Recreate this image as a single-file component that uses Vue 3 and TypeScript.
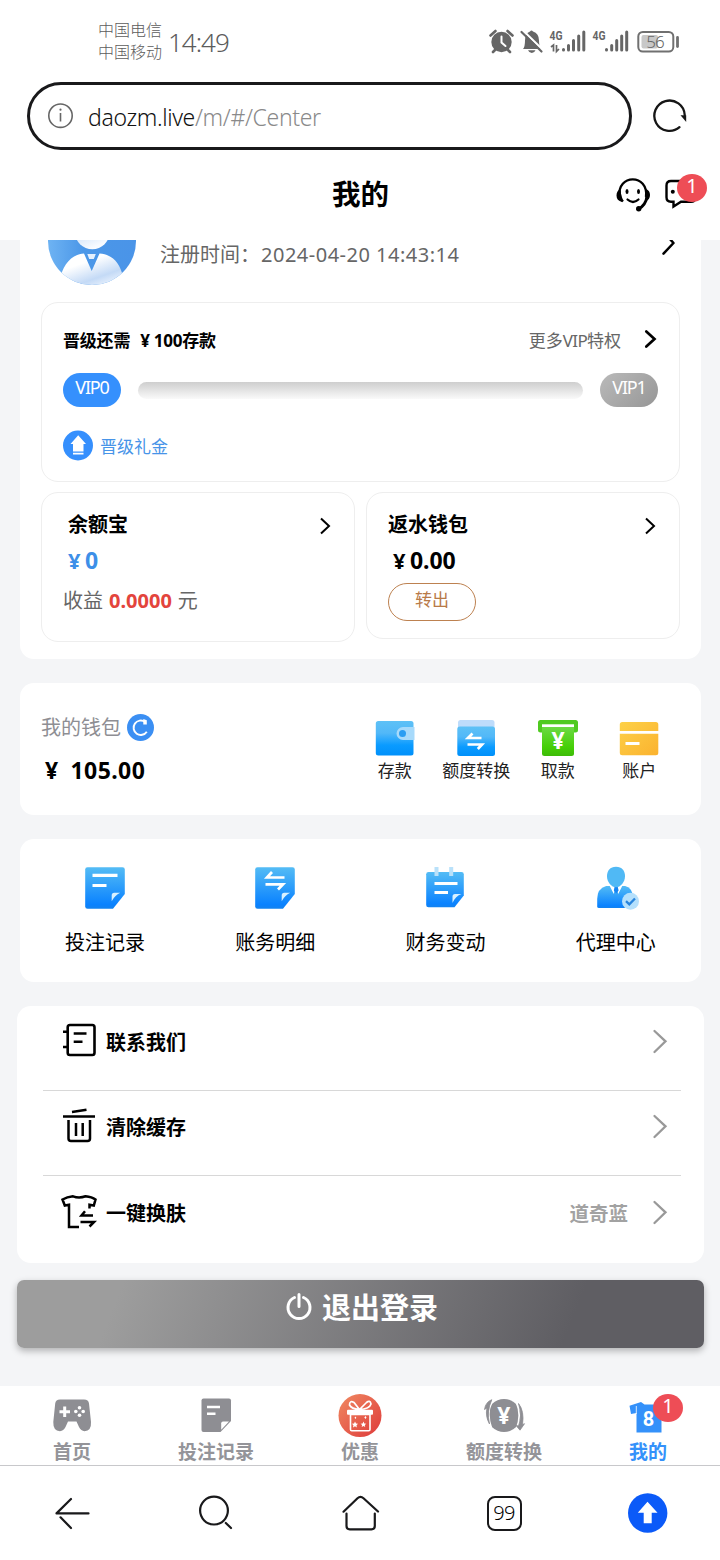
<script setup lang="ts">
interface Item { id: string; label: string }

const walletActions: Item[] = [
  { id: 'deposit', label: '存款' },
  { id: 'transfer', label: '额度转换' },
  { id: 'withdraw', label: '取款' },
  { id: 'account', label: '账户' },
]
const records: Item[] = [
  { id: 'bets', label: '投注记录' },
  { id: 'bill', label: '账务明细' },
  { id: 'finance', label: '财务变动' },
  { id: 'agent', label: '代理中心' },
]
const settings: (Item & { value?: string })[] = [
  { id: 'contact', label: '联系我们' },
  { id: 'clear', label: '清除缓存' },
  { id: 'skin', label: '一键换肤', value: '道奇蓝' },
]
const tabs: Item[] = [
  { id: 'home', label: '首页' },
  { id: 'bets', label: '投注记录' },
  { id: 'promo', label: '优惠' },
  { id: 'transfer', label: '额度转换' },
  { id: 'mine', label: '我的' },
]
</script>

<template>
  <div class="screen">
    <svg class="defs" width="0" height="0" aria-hidden="true">
      <defs>
        <linearGradient id="gBlue" x1="0" y1="0" x2="0" y2="1"><stop offset="0" stop-color="#5ec1f6" /><stop offset=".35" stop-color="#52b8f8" /><stop offset=".7" stop-color="#0a9bff" /><stop offset="1" stop-color="#0090fa" /></linearGradient>
        <linearGradient id="gDoc" x1="0" y1="0" x2="0" y2="1"><stop offset="0" stop-color="#54bcf5" /><stop offset=".9" stop-color="#0a82ff" /><stop offset="1" stop-color="#1482ee" /></linearGradient>
        <linearGradient id="gGreen" x1="0" y1="0" x2="0" y2="1"><stop offset="0" stop-color="#6cd944" /><stop offset=".7" stop-color="#45cf06" /><stop offset="1" stop-color="#3dbb08" /></linearGradient>
        <linearGradient id="gGold" x1="0" y1="0" x2="1" y2="1"><stop offset="0" stop-color="#fdd148" /><stop offset="1" stop-color="#fbb22f" /></linearGradient>
        <linearGradient id="gAvatar" x1="0" y1="0" x2="1" y2="0"><stop offset="0" stop-color="#6eb3f3" /><stop offset=".4" stop-color="#4b97e8" /><stop offset="1" stop-color="#4a94e8" /></linearGradient>
        <linearGradient id="gBody" x1="0" y1="0" x2=".6" y2="1"><stop offset=".35" stop-color="#fff" /><stop offset=".75" stop-color="#c4daf6" /><stop offset="1" stop-color="#eef5fe" /></linearGradient>
        <linearGradient id="gHead" x1="0" y1="0" x2=".4" y2="1"><stop offset=".5" stop-color="#cfe2f8" /><stop offset="1" stop-color="#f8fbff" /></linearGradient>
        <linearGradient id="gGift" x1="0" y1="0" x2="1" y2="1"><stop offset="0" stop-color="#f08a62" /><stop offset="1" stop-color="#de3a3a" /></linearGradient>
        <clipPath id="avatarClip"><circle cx="92" cy="241" r="44" /></clipPath>
      </defs>
    </svg>

    <div class="status">
      <div class="carriers"><span>中国电信</span><span>中国移动</span></div>
      <div class="time">14:49</div>
      <svg class="status-icons" width="194" height="30" viewBox="488 26 194 30">
        <g fill="#666">
          <circle cx="501.500" cy="42" r="10.200" />
          <path d="M490.500 35.500 495.500 31M512.500 35.500 507.500 31" stroke="#666" stroke-width="2.600" stroke-linecap="round" />
          <path d="M495 50l-2 2M508 50l2 2" stroke="#666" stroke-width="2.600" stroke-linecap="round" />
          <path d="M501.500 36.500v6l4 3.500" stroke="#fff" stroke-width="2" fill="none" stroke-linecap="round" />
          <path d="M523 49q2-2 2-8.500 0-7.500 5-9 1.500-2 3 0 6 2 6 9 0 6 2 8.500z" />
          <path d="M528 50.300h7.500q-1 2.700-3.700 2.700t-3.800-2.700z" />
          <path d="M522.500 30 543.500 50.500" stroke="#fff" stroke-width="2.200" />
          <path d="M521.500 32 541.500 51.500" stroke="#666" stroke-width="2.200" stroke-linecap="round" />
        </g>
        <g stroke="#666" stroke-width="3" stroke-linecap="round">
          <path d="M563.500 49.500v.5M568.500 45.500v4.500M573.500 40.500v9.500M578.700 36v14M583.800 32v18" />
          <path d="M606.500 49.500v.5M611.700 45.500v4.500M616.700 40.500v9.500M621.700 36v14M626.700 32v18" />
        </g>
        <path d="M551 47l2.500-2v6.500M556.500 45v6.500l2.500-2.500" fill="none" stroke="#666" stroke-width="1.700" />
        <text class="net" x="549.500" y="40" textLength="13" lengthAdjust="spacingAndGlyphs">4G</text>
        <text class="net" x="592.500" y="40" textLength="13" lengthAdjust="spacingAndGlyphs">4G</text>
        <rect x="638.300" y="32" width="35" height="19.500" rx="4.500" fill="none" stroke="#707070" stroke-width="2" />
        <rect x="641.500" y="35" width="16.500" height="13.500" rx="2" fill="#c8c8c8" />
        <path d="M677.500 37.500v9" stroke="#707070" stroke-width="2.800" stroke-linecap="round" />
        <text class="battery" x="655" y="47.700" text-anchor="middle">56</text>
      </svg>
    </div>

    <div class="address">
      <div class="pill">
        <svg width="28" height="28" viewBox="47 102 28 28" fill="none" stroke="#666" stroke-width="1.600"><circle cx="60.500" cy="115.700" r="11.700" /><path d="M60.500 113v8.500" /><circle cx="60.500" cy="109.700" r="1.100" fill="#666" stroke="none" /></svg>
        <div class="url">daozm.live<span>/m/#/Center</span></div>
      </div>
      <svg class="reload" width="38" height="38" viewBox="651 97 38 38"><path d="M679.500 127.200A15.200 15.200 0 1 1 684.700 115" fill="none" stroke="#161616" stroke-width="2.300" stroke-linecap="round" /><path d="M680.500 115.200h5.700v6.800z" fill="#161616" /></svg>
    </div>

    <header class="header">
      <h1>我的</h1>
      <svg class="support" width="38" height="36" viewBox="614 177 38 36" fill="none" stroke="#000">
        <path d="M619.500 197C616.500 173.500 649 173.500 646 197M619.500 192q1 7 3.500 9.500" stroke-width="2.300" />
        <path d="M647 196q-1 9-8.500 13" stroke-width="2.800" />
        <path d="M620.500 189q-4 1.500-4 6.500t5.500 6.500zM646 189q4 1.500 4 6t-4.500 6.500z" fill="#000" stroke="none" />
        <circle cx="638.700" cy="208.800" r="2.700" fill="#000" stroke="none" /><ellipse cx="627" cy="191.500" rx="1.500" ry="2.600" fill="#000" stroke="none" /><ellipse cx="638.500" cy="191.500" rx="1.500" ry="2.600" fill="#000" stroke="none" />
        <path d="M627.500 199.500q5.500 5 11 0" stroke-width="2.200" stroke-linecap="round" />
      </svg>
      <div class="message">
        <svg width="34" height="32" viewBox="663 178 34 32" fill="none" stroke="#000" stroke-width="2.400"><path d="M694 201q-1 .8-3 .8H681l-7.500 4.700v-4.700H671q-4.500 0-4.500-4.500V185.500q0-4.500 4.500-4.500h18q4.500 0 4.500 4.500z" /><circle cx="672.800" cy="191.800" r="2" fill="#000" stroke="none" /></svg>
        <span class="badge">1</span>
      </div>
    </header>

    <main class="content">
      <section class="card profile">
        <div class="user">
          <svg class="avatar" width="88" height="45" viewBox="48 240 88 45">
            <g clip-path="url(#avatarClip)">
              <rect x="48" y="197" width="88" height="88" fill="url(#gAvatar)" />
              <circle cx="92.300" cy="232" r="17.300" fill="url(#gHead)" />
              <path d="M61 276C64 262 74 254 84 253.500L91.700 271 99.500 253.500C111 254 119 262 122 273V290H61z" fill="url(#gBody)" />
              <path d="M87.300 254h8.500l-2 5h-4.600z" fill="#e5f0fd" />
            </g>
          </svg>
          <div class="registered"><span>注册时间：</span><span class="date">2024-04-20 14:43:14</span></div>
          <svg class="user-arrow" width="16" height="18" viewBox="661 240 16 18"><path d="M664 232.500 673.500 243 663.500 253.700" fill="none" stroke="#000" stroke-width="2.500" stroke-linecap="round" stroke-linejoin="round" /></svg>
        </div>

        <div class="vip">
          <div class="vip-head">
            <b>晋级还需<i>¥</i>100存款</b>
            <span class="more">更多<em>VIP</em>特权</span>
            <svg width="14" height="20" viewBox="644 329.500 14 20"><path d="M646.300 332 654.500 339.500 646.300 347" fill="none" stroke="#000" stroke-width="2.700" stroke-linecap="round" /></svg>
          </div>
          <div class="levels"><span class="level now">VIP0</span><div class="track"></div><span class="level next">VIP1</span></div>
          <div class="gift">
            <svg width="30" height="31" viewBox="63 429.500 30 31"><circle cx="78" cy="445" r="15" fill="#358ffd" /><path d="M78.200 434.800 86 443.500H83.500V451H73V443.500H70.500zM73 452.300h10.500v1.800H73z" fill="#fff" /></svg>
            <span>晋级礼金</span>
          </div>
        </div>

        <div class="purses">
          <div class="purse treasure">
            <div class="purse-title"><b>余额宝</b><svg width="12" height="18" viewBox="319 517 12 18"><path d="M321 518.500 329 526 321 533.500" fill="none" stroke="#000" stroke-width="2" /></svg></div>
            <div class="amount blue"><i>¥</i>0</div>
            <div class="income"><span>收益</span><b>0.0000</b><span>元</span></div>
          </div>
          <div class="purse rebate">
            <div class="purse-title"><b>返水钱包</b><svg width="12" height="18" viewBox="644 517 12 18"><path d="M646 518.500 654 526 646 533.500" fill="none" stroke="#000" stroke-width="2" /></svg></div>
            <div class="amount"><i>¥</i>0.00</div>
            <button class="out">转出</button>
          </div>
        </div>
      </section>

      <section class="card wallet">
        <div class="balance">
          <div class="balance-label"><span>我的钱包</span>
            <svg width="27" height="27" viewBox="127 714.500 27 27"><circle cx="140.500" cy="728" r="13.500" fill="#3b8ff3" /><path d="M146.800 732.200A7.200 7.200 0 1 1 145 722.400" fill="none" stroke="#fff" stroke-width="1.900" /><path d="M143.300 719.500 146.800 720.800V725h-3.500" fill="#fff" /></svg>
          </div>
          <div class="balance-value"><i>¥</i>105.00</div>
        </div>
        <div class="actions">
          <div v-for="a in walletActions" :key="a.id" class="action">
            <svg v-if="a.id === 'deposit'" width="44" height="40" viewBox="373.500 718 44 40"><rect x="376.300" y="721" width="37.700" height="34.500" rx="2.500" fill="url(#gBlue)" /><path d="M403.500 727H415v13h-11.500a6.500 6.500 0 0 1 0-13z" fill="#a7dafb" /><circle cx="403" cy="733.500" r="3.500" fill="#2a9df2" /></svg>
            <svg v-else-if="a.id === 'transfer'" width="44" height="40" viewBox="454 718 44 40"><rect x="458" y="720" width="36.500" height="20" rx="2.500" fill="#bedcfb" /><rect x="457.300" y="726.500" width="37.700" height="29.500" rx="2.500" fill="url(#gBlue)" /><path d="M481.500 738H468L472.500 733.500M467.500 744.500H482L477.800 749" fill="none" stroke="#fff" stroke-width="2.700" /></svg>
            <svg v-else-if="a.id === 'withdraw'" width="44" height="40" viewBox="536 718 44 40"><rect x="538" y="720" width="40" height="12.500" rx="2.500" fill="#4fca20" /><rect x="542" y="724.300" width="32" height="3" fill="#fff" /><path d="M542 727h32v26.500q0 2.500-2.500 2.500h-27q-2.500 0-2.500-2.500z" fill="url(#gGreen)" /><text class="yen" x="558" y="749" text-anchor="middle">¥</text></svg>
            <svg v-else width="44" height="40" viewBox="617.500 718 44 40"><path d="M620.300 731v-6.500q0-2.500 2.500-2.500h33.500q2.500 0 2.500 2.500v6.500zM620.300 733.800h38.500v19q0 2.500-2.500 2.500h-33.500q-2.500 0-2.500-2.500z" fill="url(#gGold)" /><path d="M626 743.500h14" stroke="#fff" stroke-width="3" /></svg>
            <span>{{ a.label }}</span>
          </div>
        </div>
      </section>

      <section class="card records">
        <div v-for="r in records" :key="r.id" class="record">
          <svg width="46" height="46" viewBox="82.500 865 46 46">
            <template v-if="r.id === 'bets' || r.id === 'bill'">
              <path d="M88 867.200H123q2.300 0 2.300 2.300V894L113.500 908.700H88q-2.300 0-2.300-2.300V869.500q0-2.300 2.300-2.300z" fill="url(#gDoc)" />
              <path d="M120.700 892.800q-5.500 2.500-8.500 8.500l0-6q0-2.500 2.500-2.500z" fill="#d8f1ff" />
              <path v-if="r.id === 'bets'" d="M93 875.300h25M93 885.500h14" stroke="#fff" stroke-width="3.200" />
              <path v-else d="M115 877.500H97.500L102.500 872M96 884.300H113.500L108.500 889.500" fill="none" stroke="#fff" stroke-width="2.700" />
            </template>
            <template v-else-if="r.id === 'finance'">
              <path d="M89 872H122q2.300 0 2.300 2.300V895.500L115 907.300H89q-2.300 0-2.300-2.300V874.300q0-2.300 2.300-2.300z" fill="url(#gDoc)" />
              <path d="M97 867v9M111.700 867v9" stroke="#b9e1fa" stroke-width="4" />
              <path d="M95 883.500h23M95 892.500h13.500" stroke="#fff" stroke-width="2.800" />
              <path d="M122 894q-6 2-9 9v-6.500q0-2.500 2.500-2.500z" fill="#d8f1ff" />
            </template>
            <template v-else>
              <path d="M86.700 906.500V899q0-10.500 9-13h19q8 2 8 13v9H88.500q-1.800 0-1.800-1.500z" fill="url(#gDoc)" />
              <path d="M99 885.500 103.300 894l1.400-7h1.600l1.400 7 4.300-8.500z" fill="#fff" />
              <path d="M104 887h3.300l.8 3.500-2.400 3-2.400-3z" fill="#1685f3" />
              <path d="M105.500 866.800c-6 0-9 4-9 9.500 0 6 4.500 11 9 11s9-5 9-11c0-5.500-3-9.500-9-9.500z" fill="#50b9f5" />
              <circle cx="120" cy="901.200" r="8.500" fill="#b5e0fc" /><path d="M115.500 901.200 118.800 904.300 124.500 898.500" fill="none" stroke="#2784dd" stroke-width="2.300" />
            </template>
          </svg>
          <span>{{ r.label }}</span>
        </div>
      </section>

      <section class="card settings">
        <div v-for="s in settings" :key="s.id" class="setting">
          <svg v-if="s.id === 'contact'" width="38" height="36" viewBox="60 1022 38 36" fill="none" stroke="#000" stroke-width="2.600"><rect x="67.700" y="1025" width="26.800" height="30" rx="2.200" /><path d="M63 1031.800h5M63 1047h5M73.700 1033.500h12.800M73.700 1041.800h8.800" /></svg>
          <svg v-else-if="s.id === 'clear'" width="38" height="36" viewBox="60 1107 38 36" fill="none" stroke="#000" stroke-width="2.500"><path d="M63 1116.500h32M72 1112 86.500 1109.700M68.500 1120v18.500q0 2.500 2.500 2.500h16.500q2.500 0 2.500-2.500V1120M76 1123v13M82.700 1123v13" /></svg>
          <svg v-else width="38" height="36" viewBox="60 1194 38 36" fill="none" stroke="#000" stroke-width="2.500"><path d="M79 1228H69V1205.800L64.800 1206.500 62.500 1200.500Q67 1198 73 1197.300 79 1199.500 85.500 1197.300 92 1198 95.500 1200.500L93.800 1206.500 89.500 1205.800V1209.500M93 1216.500H81.500L85 1212.300M80.500 1223H94L89.500 1227.500" /></svg>
          <b>{{ s.label }}</b>
          <span class="value">{{ s.value }}</span>
          <svg class="go" width="16" height="26" viewBox="652 1199 16 26"><path d="M654.500 1202 665.500 1212.300 654.500 1223" fill="none" stroke="#999" stroke-width="2.300" stroke-linecap="round" /></svg>
        </div>
      </section>

      <button class="logout">
        <svg width="28" height="28" viewBox="285 1293 28 28" fill="none" stroke="#fff" stroke-width="3" stroke-linecap="round"><path d="M294.500 1297.500A11 11 0 1 0 303.500 1297.500M299 1294.500v12" /></svg>
        <span>退出登录</span>
      </button>
    </main>

    <nav class="tabs">
      <div v-for="t in tabs" :key="t.id" class="tab" :class="t.id">
        <svg v-if="t.id === 'home'" width="46" height="44" viewBox="49 1394 46 44"><path d="M60 1399.500H84Q88.500 1399.500 89 1403.500L91 1422Q91.500 1431 84.500 1431.200 81 1431 79 1427L76.500 1421.500H68L65.500 1427Q63.500 1431 60 1431.200 53 1431 53.300 1422L55.200 1403.500Q55.700 1399.500 60 1399.500z" fill="#8e8e93" /><path d="M59.500 1411.800h10.500M64.700 1406.500v10.500" stroke="#fff" stroke-width="3" /><g fill="#fff"><circle cx="79.500" cy="1407.800" r="1.800" /><circle cx="79.500" cy="1415.300" r="1.800" /><circle cx="75.800" cy="1411.500" r="1.800" /><circle cx="83.200" cy="1411.500" r="1.800" /></g></svg>
        <svg v-else-if="t.id === 'bets'" width="46" height="44" viewBox="193.500 1394 46 44"><path d="M204 1398.500H229.500q2 0 2 2V1421L221 1432H204q-2 0-2-2V1400.500q0-2 2-2z" fill="#8e8e93" /><path d="M207.500 1407h13M207.500 1413.700h8.500" stroke="#fff" stroke-width="2.400" /><path d="M229.500 1421.500h-6q-1.800 0-1.800 1.800v6.500z" fill="#fff" /></svg>
        <svg v-else-if="t.id === 'promo'" width="46" height="44" viewBox="337.500 1394 46 44"><circle cx="360.500" cy="1415.600" r="21.500" fill="url(#gGift)" /><rect x="347.500" y="1409.700" width="26" height="5" rx="1" fill="#fff" /><path d="M351 1414.500h19.500v15q0 1.300-1.300 1.300h-17q-1.200 0-1.200-1.300z" fill="none" stroke="#fff" stroke-width="1.600" /><path d="M359.800 1409.500Q352 1409 350 1405 350 1400 354.500 1402.500L360 1409.500 367 1402.500Q370.500 1399.500 371.500 1404 370 1409 360 1409.500z" fill="none" stroke="#fff" stroke-width="1.700" /><path d="m355.500 1421.500 1 2 2 .3-1.500 1.500.3 2.200-1.800-1.200-2 1.200.4-2.200-1.500-1.500 2.200-.3zM364 1421.500l.8 2 2 .2-1.500 1.400.4 2-1.700-1-1.800 1 .4-2-1.500-1.400 2-.2zM366 1416l1 1.500-1 1.500-1.200-1.500zM356 1416.500l.8 1.200-.8 1.300-1-1.300z" fill="#fff" /></svg>
        <svg v-else-if="t.id === 'transfer'" width="46" height="44" viewBox="481.500 1394 46 44"><circle cx="504.500" cy="1415.500" r="16.600" fill="#8e8e93" /><path d="M492 1402.500q-5.500 11 0 26M517 1402.500q5.500 13 0 26" fill="none" stroke="#fff" stroke-width="1.800" /><path d="M492.300 1399.700Q486 1402 485 1409.500L487.500 1408Q485.500 1416 490 1424 487 1411 492.300 1399.700zM519 1403.500Q525 1411 523 1424.500L525 1423.700 520.500 1430.200 516.500 1425.500 519 1426Q523 1416 519 1403.500z" fill="#8e8e93" stroke="#8e8e93" stroke-width=".8" /><text class="yen" x="504.300" y="1424" text-anchor="middle">¥</text></svg>
        <svg v-else width="46" height="44" viewBox="625.500 1394 46 44"><path d="M630 1405.800 641.500 1402 645 1404.500H655l3-2.500 9 3.500v6.500l-5 1.500V1432.500H637V1413L631.500 1414z" fill="#3491fa" /><path d="M636.800 1406v8" stroke="#fff" stroke-width=".8" /><text class="eight" x="649" y="1426" text-anchor="middle">8</text></svg>
        <span class="tab-label">{{ t.label }}</span>
        <span v-if="t.id === 'mine'" class="badge">1</span>
      </div>
    </nav>

    <footer class="browser">
      <div><svg width="40" height="40" viewBox="52 1493 40 40"><path d="M88.500 1513.400H56.500L71 1499M60.500 1517.300 71 1528" /></svg></div>
      <div><svg width="40" height="40" viewBox="196 1493 40 40"><circle cx="214" cy="1510.600" r="13.900" /><path d="M225.800 1523 231 1528" /></svg></div>
      <div><svg width="40" height="40" viewBox="340 1493 40 40"><path d="M343.500 1511.700 357.500 1498.200Q360.500 1495.500 363.500 1498.200L378 1511.500M346.500 1513.500V1526q0 3.300 3.300 3.300H371.500q3.300 0 3.300-3.300V1513.500" /></svg></div>
      <div><span class="pages">99</span></div>
      <div><svg width="40" height="40" viewBox="628 1493 40 40"><circle class="solid" cx="647.700" cy="1513" r="19.700" /><path d="M647.500 1501.800 657.500 1512.700H651.700V1523.300H643.700V1512.700H637.800z" class="arrow" /></svg></div>
    </footer>
  </div>
</template>

<style>
html, body { background: #fff; }
</style>

<style scoped>
* { box-sizing: border-box; }
svg { display: block; flex: none; }
i, em { font-style: normal; }
button { font: inherit; border: 0; padding: 0; }
.defs { position: absolute; }
.screen { width: 720px; height: 1560px; overflow: hidden; display: flex; flex-direction: column; background: #fff; color: #000; font-family: "Noto Sans", "Noto Sans CJK SC", sans-serif; white-space: nowrap; }

.status { height: 82px; display: flex; align-items: flex-start; padding-left: 98px; color: #5c5c5c; }
.carriers { width: 70px; margin-top: 19px; display: flex; flex-direction: column; font-size: 16px; line-height: 22px; font-weight: 300; }
.time { width: 320px; margin-top: 27px; font-size: 26px; line-height: 30px; font-weight: 300; letter-spacing: -1px; }
.status-icons { margin-top: 26px; }
.net { font: 700 13px "Roboto", sans-serif; fill: #666; }
.battery { font: 300 17px "Noto Sans", sans-serif; fill: #666; letter-spacing: -1px; }

.address { height: 68px; display: flex; align-items: center; padding-left: 27px; }
.pill { width: 605px; height: 68px; border: 3px solid #19191b; border-radius: 34px; display: flex; align-items: center; padding-left: 17px; }
.url { margin: 2px 0 0 13px; font-size: 23px; line-height: 32px; font-weight: 300; letter-spacing: -.35px; color: #111; }
.url span { color: #8a8a8a; }
.reload { margin-left: 19px; }

.header { height: 90px; display: grid; grid-template-columns: 614px 49px 57px; align-items: start; position: relative; }
.header h1 { margin: 24px 0 0 107px; font-size: 28.500px; line-height: 40px; font-weight: 700; text-align: center; }
.support { margin-top: 27px; }
.message { position: relative; padding-top: 28px; }
.badge { position: absolute; width: 30px; height: 28px; border-radius: 50%; background: #ee4d56; color: #fff; text-align: center; font: 400 20px/24px "Noto Sans", sans-serif; }
.message .badge { left: 14px; top: 23.500px; }

.content { height: 1146px; background: #f4f5f7; padding: 0 16px 0 17px; flex: none; }
.card { background: #fff; border-radius: 14px; margin: 0 3px; width: 681px; }
.profile { height: 418.500px; border-radius: 0 0 14px 14px; padding: 0 21px; }
.user { height: 62px; display: flex; align-items: flex-start; padding-left: 7px; }
.registered { width: 525px; padding: 1px 0 0 24px; display: flex; font-size: 20px; line-height: 28px; color: #666; }
.date { font-size: 20px; letter-spacing: .5px; margin-left: 1px; }
.vip { height: 180px; border: 1px solid #eee; border-radius: 17px; padding: 23px 21px 0; }
.vip-head { display: flex; align-items: center; height: 27px; }
.vip-head b { font-size: 17px; letter-spacing: -.2px; }
.vip-head i { margin: 0 4px 0 10px; }
.vip-head svg { margin-top: -1px; }
.more { margin: 0 23px 0 auto; font-size: 17px; color: #666; }
.more em { letter-spacing: -.7px; }
.levels { margin-top: 20px; height: 34px; display: flex; align-items: center; justify-content: space-between; }
.level { width: 58px; height: 34px; border-radius: 17px; color: #fff; text-align: center; font-size: 18px; line-height: 29px; letter-spacing: -1.200px; }
.now { background: #3590fd; }
.next { background: linear-gradient(135deg, #bababa, #969696); }
.track { width: 445px; height: 17px; border-radius: 9px; background: linear-gradient(#cecece, #fafafa); }
.gift { display: flex; align-items: center; margin-top: 23px; height: 31px; gap: 7px; font-size: 17px; color: #4794e8; }
.purses { margin-top: 10px; display: flex; justify-content: space-between; align-items: flex-start; }
.purse { width: 314px; border: 1px solid #eee; border-radius: 17px; }
.treasure { height: 149.500px; }
.rebate { height: 147px; }
.purse-title { display: flex; justify-content: space-between; height: 34px; padding: 17px 23px 0 26px; font-size: 20px; line-height: 30px; }
.rebate .purse-title { padding-left: 21px; }
.purse-title svg { margin-top: 7px; }
.amount { height: 30px; margin: 18px 0 0 26px; font-size: 23px; line-height: 30px; font-weight: 700; letter-spacing: -.1px; }
.amount i { font-size: 22px; margin-right: 4.500px; }
.blue { color: #3d8fe8; }
.income { display: flex; gap: 6px; margin: 11px 0 0 21px; font-size: 20px; line-height: 30px; color: #666; }
.income b { color: #e3443c; font-size: 20px; }
.out { display: block; width: 88px; height: 38px; margin: 8px 0 0 21px; border: 1px solid #bd8150; border-radius: 19px; background: #fff; color: #b87a48; font-size: 17px; line-height: 30px; padding-bottom: 4px; }

.wallet { margin-top: 24.500px; height: 131.500px; display: flex; padding-left: 21px; }
.balance { width: 313px; padding-top: 30px; }
.balance-label { height: 29px; display: flex; align-items: center; gap: 6px; font-size: 20px; color: #8e8e93; }
.balance-label span { margin-top: -2px; }
.balance-value { height: 30px; margin-top: 13px; padding-left: 4px; font-size: 23px; line-height: 30px; font-weight: 700; letter-spacing: .4px; }
.balance-value i { margin-right: 12px; }
.actions { display: grid; grid-template-columns: repeat(4, 81.500px); padding-top: 35px; }
.action { display: flex; flex-direction: column; align-items: center; gap: 1px; font-size: 17px; line-height: 24px; color: #222; }
.yen { font: 700 23px "Noto Sans", sans-serif; fill: #fff; }

.records { margin-top: 24px; height: 143px; display: grid; grid-template-columns: repeat(4, 170.200px); padding-top: 26px; }
.record { display: flex; flex-direction: column; align-items: center; gap: 17px; font-size: 20px; line-height: 30px; }

.settings { width: 687px; height: 257px; margin: 24px 0 0; padding: 0 23px 0 26px; }
.setting { height: 85px; padding: 16px 13px 0 17px; display: flex; align-items: flex-start; border-bottom: 1px solid #d8d8d8; }
.setting:last-child { border: 0; padding-top: 17px; }
.setting b { margin-left: 8px; font-size: 20px; line-height: 41px; font-weight: 600; }
.value { margin: 0 24px 0 auto; font-size: 19.500px; line-height: 41px; font-weight: 600; color: #a2a2a2; }
.go { margin-top: 6px; }

.logout { width: 687px; height: 68px; margin-top: 17px; border-radius: 7px; background: linear-gradient(112deg, #9d9d9d 15%, #5f5e63 80%); box-shadow: 0 3px 7px rgba(0, 0, 0, .28); color: #fff; display: flex; justify-content: center; padding: 13px 0 0 2px; gap: 9px; font-size: 29px; font-weight: 700; line-height: 30px; }

.tabs { height: 80px; flex: none; display: grid; grid-template-columns: repeat(5, 144px); border-bottom: 1px solid #c8c8cb; }
.tab { position: relative; display: flex; flex-direction: column; align-items: center; padding-top: 8px; font-size: 19px; line-height: 26px; font-weight: 600; color: #949499; }
.tab.mine { color: #3491fa; }
.tab-label { margin-top: 1px; }
.tab .badge { left: 77px; top: 8px; }
.eight { font: 700 20px "Roboto", sans-serif; fill: #fff; }

.browser { height: 94px; display: grid; grid-template-columns: repeat(5, 144px); align-items: center; justify-items: center; }
.browser svg { fill: none; stroke: #19191b; stroke-width: 2.200; stroke-linecap: round; stroke-linejoin: round; }
.browser .solid, .browser .arrow { stroke: none; }
.browser .solid { fill: #0b5af8; }
.browser .arrow { fill: #fff; }
.pages { display: block; width: 35px; height: 35px; border: 2.200px solid #19191b; border-radius: 8px; text-align: center; font-size: 20px; line-height: 30px; font-weight: 300; letter-spacing: -.6px; }
</style>
